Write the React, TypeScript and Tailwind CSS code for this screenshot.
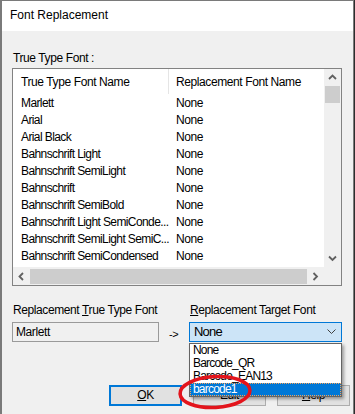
import React from "react";

const fonts = [
  "Marlett",
  "Arial",
  "Arial Black",
  "Bahnschrift Light",
  "Bahnschrift SemiLight",
  "Bahnschrift",
  "Bahnschrift SemiBold",
  "Bahnschrift Light SemiConde...",
  "Bahnschrift SemiLight SemiC...",
  "Bahnschrift SemiCondensed",
];

const targets = ["None", "Barcode_QR", "Barcode_EAN13", "barcode1"];

// small scrollbar arrow
const Arrow = ({ dir }: { dir: "up" | "down" | "left" | "right" }) => {
  const pts = {
    up: "1,5 4.5,1.5 8,5",
    down: "1,1.5 4.5,5 8,1.5",
    left: "5,1 1.5,4.5 5,8",
    right: "1.5,1 5,4.5 1.5,8",
  }[dir];
  const vertical = dir === "up" || dir === "down";
  return (
    <svg
      width={vertical ? 9 : 7}
      height={vertical ? 7 : 9}
      viewBox={vertical ? "0 0 9 7" : "0 0 7 9"}>
      <polyline points={pts} fill="none" stroke="#606060" strokeWidth="1.8" />
    </svg>
  );
};

const App = () => {
  return (
    <div className="w-[355px] h-[414px] bg-[#2d2d2d] overflow-hidden font-['Liberation_Sans',Arial,sans-serif]">
      <div className="relative w-[354px] h-[414px] bg-[#f0f0f0] border-l-2 border-r border-t border-[#7a7a7a] flex flex-col text-[12px] tracking-[-0.4px] text-black">
        {/* title bar */}
        <div className="h-[30px] shrink-0 bg-white flex items-center pl-[8px] pb-[2px] tracking-normal">
          Font Replacement
        </div>

        <div className="flex flex-col pl-[10px]">
          <div className="mt-[20px] pl-[1px] h-[14px] leading-[14px]">
            True Type Font :
          </div>

          {/* list view */}
          <div className="mt-[3px] w-[330px] h-[218px] border border-[#828282] bg-white flex flex-col">
            <div className="flex h-[198px]">
              <div className="w-[311px] flex flex-col overflow-hidden">
                <div className="flex h-[25px] items-center shrink-0">
                  <div className="w-[155px] pl-[8px]">True Type Font Name</div>
                  <div className="w-px h-full bg-[#e5e5e5]" />
                  <div className="pl-[7px]">Replacement Font Name</div>
                </div>
                {fonts.map((f) => (
                  <div key={f} className="flex h-[17px] items-center shrink-0">
                    <div className="w-[156px] pl-[8px] whitespace-nowrap tracking-[-0.6px]">
                      {f}
                    </div>
                    <div className="pl-[7px]">None</div>
                  </div>
                ))}
              </div>
              <div className="w-[17px] bg-[#f0f0f0] flex flex-col items-center">
                <div className="h-[17px] flex items-center justify-center">
                  <Arrow dir="up" />
                </div>
                <div className="w-[15px] h-[17px] bg-[#cdcdcd]" />
                <div className="flex-1" />
                <div className="h-[17px] flex items-center justify-center">
                  <Arrow dir="down" />
                </div>
              </div>
            </div>
            <div className="flex h-[18px]">
              <div className="w-[311px] bg-[#f0f0f0] flex items-center">
                <div className="w-[17px] flex justify-center">
                  <Arrow dir="left" />
                </div>
                <div className="flex-1 h-[15px] bg-[#cdcdcd]" />
                <div className="w-[17px] flex justify-center">
                  <Arrow dir="right" />
                </div>
              </div>
              <div className="w-[17px] bg-[#f0f0f0]" />
            </div>
          </div>

          {/* replacement fields */}
          <div className="mt-[17px] flex">
            <div className="w-[147px] flex flex-col">
              <div className="pl-[1px] h-[14px] leading-[14px]">
                Replacement <span className="underline">T</span>rue Type Font
              </div>
              <div className="mt-[5px] h-[20px] border border-[#9a9a9a] bg-[#f0f0f0] flex items-center pl-[3px]">
                Marlett
              </div>
            </div>
            <div className="w-[30px] pl-[10px] pt-[23px] text-[11px]">-&gt;</div>
            <div className="relative w-[153px] flex flex-col">
              <div className="pl-[1px] h-[14px] leading-[14px]">
                <span className="underline">R</span>eplacement Target Font
              </div>
              <div className="mt-[5px] h-[20px] border border-[#0078d7] bg-[#cce4f7] flex items-center justify-between pl-[4px] pr-[5px] text-[13px] tracking-[-0.8px]">
                <span>None</span>
                <svg width="9" height="6" viewBox="0 0 9 6">
                  <polyline points="0.5,0.5 4.5,4.5 8.5,0.5" fill="none" stroke="#404040" strokeWidth="1" />
                </svg>
              </div>
              {/* open dropdown */}
              <div className="absolute left-0 top-[40px] z-10 w-[153px] border border-[#646464] bg-white shadow-[2px_2px_3px_rgba(0,0,0,0.35)] tracking-[-0.8px]">
                {targets.map((t) =>
                  t === "barcode1" ? (
                    <div
                      key={t}
                      className="h-[13px] leading-[11px] pl-[2px] bg-[#0078d7] text-white border border-dotted border-[#f5a35a]">
                      {t}
                    </div>
                  ) : (
                    <div key={t} className="h-[13px] leading-[13px] pl-[3px]">
                      {t}
                    </div>
                  )
                )}
              </div>
            </div>
          </div>

          {/* buttons */}
          <div className="mt-[42px] ml-[97px] flex gap-[11px]">
            <div className="w-[73px] h-[21px] border-2 border-[#0078d7] bg-[#e1e1e1] flex items-center justify-center">
              <span>
                <span className="underline">O</span>K
              </span>
            </div>
            <div className="w-[73px] h-[21px] border border-[#adadad] bg-[#e1e1e1] flex items-center justify-center">
              Edit
            </div>
            <div className="w-[73px] h-[21px] border border-[#adadad] bg-[#e1e1e1] flex items-center justify-center">
              <span>
                <span className="underline">H</span>elp
              </span>
            </div>
          </div>
        </div>

        {/* red highlight mark */}
        <svg
          className="absolute left-[174px] top-[371px] z-20 rotate-[-3deg]"
          width="78"
          height="40"
          viewBox="0 0 78 40">
          <ellipse cx="39" cy="20" rx="35" ry="15.5" fill="none" stroke="#e3141c" strokeWidth="3.5" />
        </svg>
      </div>
    </div>
  );
};

export default App;
